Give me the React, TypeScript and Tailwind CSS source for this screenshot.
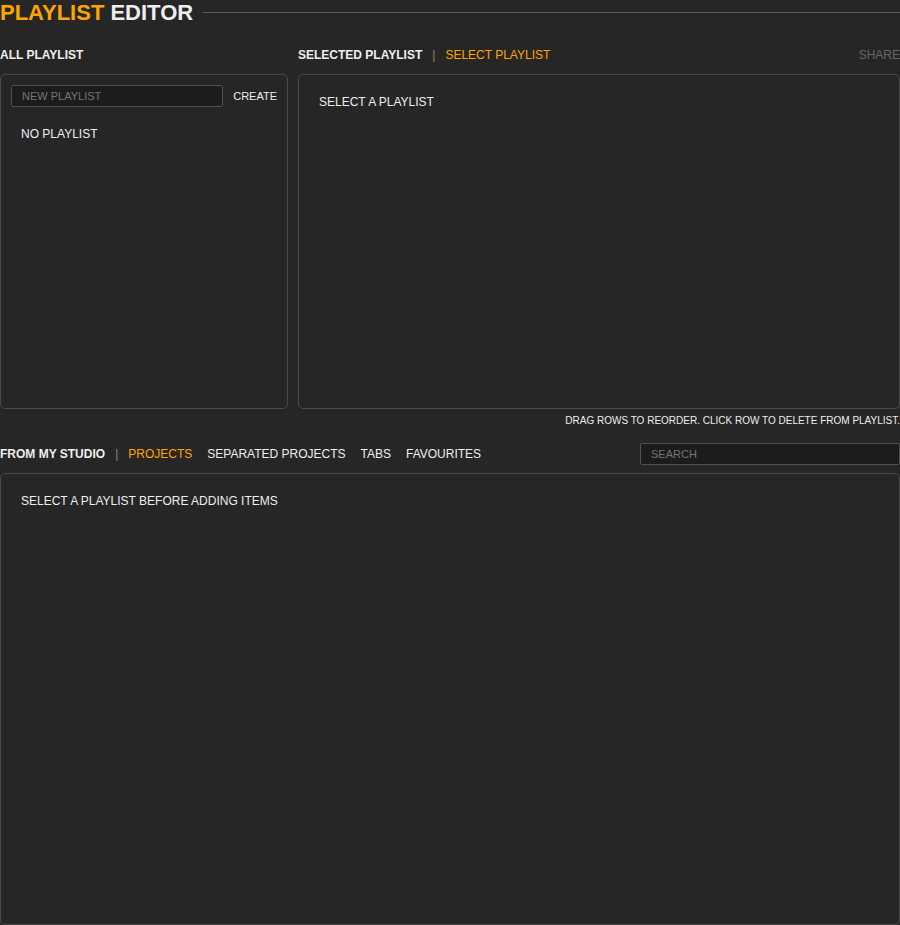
export default function App() {
  return (
    <div className="h-[925px] w-[900px] overflow-hidden bg-[#262626] font-['Liberation_Sans',Arial,sans-serif] text-[#eeeeee]">
      <div className="flex h-[25px] items-center">
        <h1 className="text-[22px] leading-[25px] font-bold whitespace-nowrap">
          <span className="text-[#ffa500]">PLAYLIST</span> EDITOR
        </h1>
        <div className="ml-[10px] h-px flex-1 bg-[#5a5a5a]"></div>
      </div>

      <div className="mt-[20px] flex gap-[10px]">
        <div className="w-[288px]">
          <div className="flex h-[20px] items-center text-[12px] font-bold">ALL PLAYLIST</div>
          <div className="mt-[9px] h-[335px] rounded-[5px] border border-[#4a4a4a] px-[10px] pt-[10px]">
            <div className="flex items-center justify-between">
              <input
                placeholder="NEW PLAYLIST"
                className="h-[22px] w-[212px] rounded-[2px] border border-[#505050] bg-[#1c1c1c] px-[10px] text-[11px] placeholder:text-[#757575] outline-none"
              />
              <span className="text-[11px]">CREATE</span>
            </div>
            <div className="mt-[20px] pl-[10px] text-[12px] leading-[14px]">NO PLAYLIST</div>
          </div>
        </div>

        <div className="flex-1">
          <div className="flex h-[20px] items-center text-[12px]">
            <span className="font-bold">SELECTED PLAYLIST</span>
            <span className="mx-[10px] text-[#a08a60]">|</span>
            <span className="text-[#ffa500]">SELECT PLAYLIST</span>
            <span className="ml-auto text-[#666666]">SHARE</span>
          </div>
          <div className="mt-[9px] h-[335px] rounded-[5px] border border-[#4a4a4a] px-[20px] pt-[20px] text-[12px] leading-[14px]">
            SELECT A PLAYLIST
          </div>
        </div>
      </div>

      <div className="mt-[5px] h-[14px] text-right text-[10px] leading-[14px]">
        DRAG ROWS TO REORDER. CLICK ROW TO DELETE FROM PLAYLIST.
      </div>

      <div className="mt-[15px] flex h-[22px] items-center text-[12px]">
        <span className="font-bold">FROM MY STUDIO</span>
        <span className="mx-[10px] text-[#7d8a96]">|</span>
        <span className="text-[#ffa500]">PROJECTS</span>
        <span className="ml-[15px]">SEPARATED PROJECTS</span>
        <span className="ml-[15px]">TABS</span>
        <span className="ml-[15px]">FAVOURITES</span>
        <input
          placeholder="SEARCH"
          className="ml-auto h-[22px] w-[260px] rounded-[2px] border border-[#505050] bg-[#1c1c1c] px-[10px] text-[11px] placeholder:text-[#757575] outline-none"
        />
      </div>

      <div className="mt-[8px] h-[452px] rounded-[5px] border border-[#4a4a4a] px-[20px] pt-[20px] text-[12px] leading-[14px]">
        SELECT A PLAYLIST BEFORE ADDING ITEMS
      </div>
    </div>
  );
}
